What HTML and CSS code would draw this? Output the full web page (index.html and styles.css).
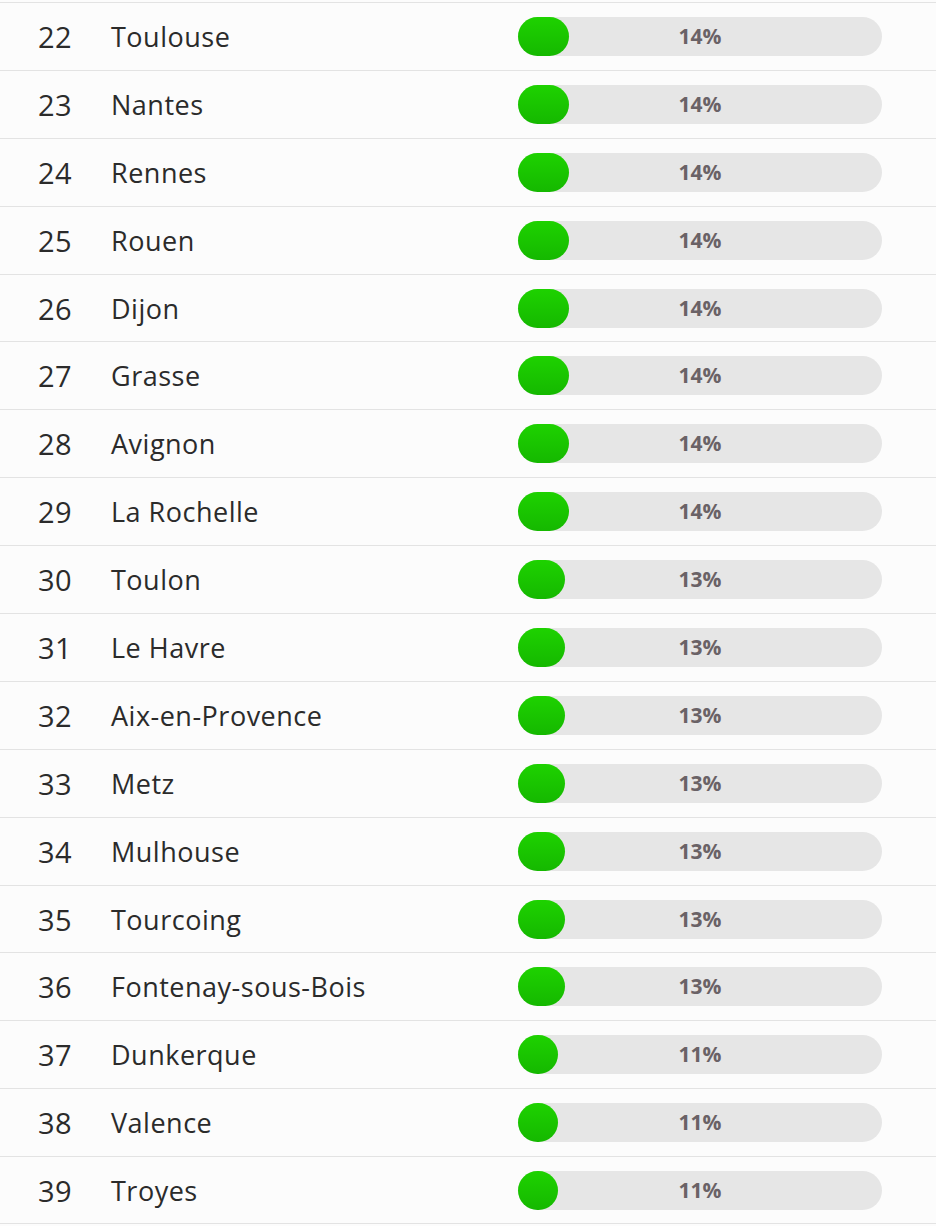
FILE: index.html
```html
<!DOCTYPE html>
<html lang="fr">
<head>
<meta charset="utf-8">
<title>Classement</title>
<link rel="stylesheet" href="styles.css">
</head>
<body>
<div class="list">
  <div class="row"><span class="rank">22</span><span class="city">Toulouse</span><div class="bar"><div class="fill" style="width:14%"></div><span class="pct">14%</span></div></div>
  <div class="row"><span class="rank">23</span><span class="city">Nantes</span><div class="bar"><div class="fill" style="width:14%"></div><span class="pct">14%</span></div></div>
  <div class="row"><span class="rank">24</span><span class="city">Rennes</span><div class="bar"><div class="fill" style="width:14%"></div><span class="pct">14%</span></div></div>
  <div class="row"><span class="rank">25</span><span class="city">Rouen</span><div class="bar"><div class="fill" style="width:14%"></div><span class="pct">14%</span></div></div>
  <div class="row"><span class="rank">26</span><span class="city">Dijon</span><div class="bar"><div class="fill" style="width:14%"></div><span class="pct">14%</span></div></div>
  <div class="row"><span class="rank">27</span><span class="city">Grasse</span><div class="bar"><div class="fill" style="width:14%"></div><span class="pct">14%</span></div></div>
  <div class="row"><span class="rank">28</span><span class="city">Avignon</span><div class="bar"><div class="fill" style="width:14%"></div><span class="pct">14%</span></div></div>
  <div class="row"><span class="rank">29</span><span class="city">La Rochelle</span><div class="bar"><div class="fill" style="width:14%"></div><span class="pct">14%</span></div></div>
  <div class="row"><span class="rank">30</span><span class="city">Toulon</span><div class="bar"><div class="fill" style="width:13%"></div><span class="pct">13%</span></div></div>
  <div class="row"><span class="rank">31</span><span class="city">Le Havre</span><div class="bar"><div class="fill" style="width:13%"></div><span class="pct">13%</span></div></div>
  <div class="row"><span class="rank">32</span><span class="city">Aix-en-Provence</span><div class="bar"><div class="fill" style="width:13%"></div><span class="pct">13%</span></div></div>
  <div class="row"><span class="rank">33</span><span class="city">Metz</span><div class="bar"><div class="fill" style="width:13%"></div><span class="pct">13%</span></div></div>
  <div class="row"><span class="rank">34</span><span class="city">Mulhouse</span><div class="bar"><div class="fill" style="width:13%"></div><span class="pct">13%</span></div></div>
  <div class="row"><span class="rank">35</span><span class="city">Tourcoing</span><div class="bar"><div class="fill" style="width:13%"></div><span class="pct">13%</span></div></div>
  <div class="row"><span class="rank">36</span><span class="city">Fontenay-sous-Bois</span><div class="bar"><div class="fill" style="width:13%"></div><span class="pct">13%</span></div></div>
  <div class="row"><span class="rank">37</span><span class="city">Dunkerque</span><div class="bar"><div class="fill" style="width:11%"></div><span class="pct">11%</span></div></div>
  <div class="row"><span class="rank">38</span><span class="city">Valence</span><div class="bar"><div class="fill" style="width:11%"></div><span class="pct">11%</span></div></div>
  <div class="row"><span class="rank">39</span><span class="city">Troyes</span><div class="bar"><div class="fill" style="width:11%"></div><span class="pct">11%</span></div></div>
</div>
</body>
</html>
```

FILE: styles.css
```css
html, body {
  margin: 0;
  padding: 0;
  background: #fcfcfc;
}

body {
  font-family: "Open Sans", "Liberation Sans", sans-serif;
  color: #2b2b2b;
}

.list {
  padding-top: 2px;
  display: flex;
  flex-direction: column;
}

.row {
  box-sizing: border-box;
  height: 67.9px;
  border-top: 1.5px solid #e3e3e3;
  display: flex;
  align-items: center;
}

.row:last-child {
  border-bottom: 1.5px solid #e3e3e3;
}

.rank {
  width: 110px;
  flex: none;
  text-align: center;
  font-size: 29px;
  font-weight: 400;
  letter-spacing: 0.3px;
  line-height: 1;
}

.city {
  flex: 1;
  padding-left: 1px;
  font-size: 27px;
  font-weight: 400;
  letter-spacing: 0.5px;
  line-height: 1;
}

.bar {
  position: relative;
  flex: none;
  width: 364px;
  height: 39px;
  margin-right: 54px;
  border-radius: 20px;
  background: #e6e6e6;
  display: flex;
  align-items: center;
  justify-content: center;
}

.fill {
  position: absolute;
  left: 0;
  top: 0;
  bottom: 0;
  min-width: 39px;
  border-radius: 20px;
  background: linear-gradient(#1ed200, #15b800);
}

.pct {
  position: relative;
  font-size: 21px;
  font-weight: 700;
  color: #6a6266;
  line-height: 1;
}
```
